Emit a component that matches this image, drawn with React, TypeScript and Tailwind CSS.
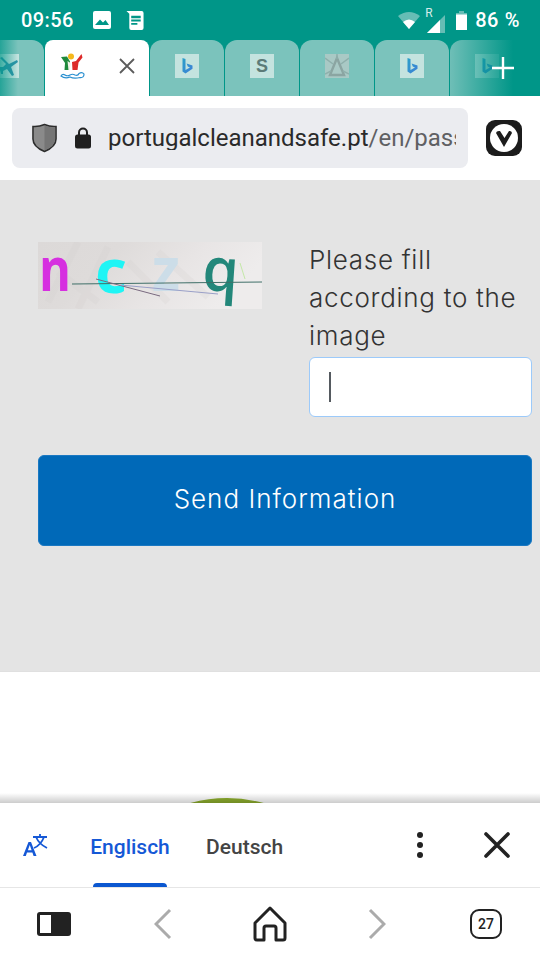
import React from "react";

const BingIcon = () => (
  <svg viewBox="0 0 24 24" className="w-6 h-6">
    <defs>
      <linearGradient id="bing" x1="0" y1="0" x2="1" y2="1">
        <stop offset="0" stopColor="#2aa0c8" />
        <stop offset="1" stopColor="#3f7fd8" />
      </linearGradient>
    </defs>
    <rect width="24" height="24" fill="#c4e3df" />
    <path d="M7.5 4 L10.5 5 V16 L15 13.5 L12.8 12.4 L11.6 9.6 L17.5 11.6 V14.8 L10.5 19.4 L7.5 17.6 Z" fill="url(#bing)" />
  </svg>
);

const Favicon = ({ children }: { children: React.ReactNode }) => (
  <div className="w-[74px] h-full shrink-0 rounded-t-xl bg-[#7bc3bc] flex items-center justify-center pb-[4px]">
    {children}
  </div>
);

const StatusBar = () => (
  <div className="h-10 flex items-center pl-[21px] pr-5 text-white">
    <span className="text-[20px] leading-none font-['Roboto',sans-serif] font-medium tracking-[0.4px] mr-[19px]">09:56</span>
    <svg viewBox="0 0 18 18" className="w-[18px] h-[18px] mr-[15px]">
      <rect width="18" height="18" rx="2" fill="#fff" />
      <path d="M2 14 L7 8.5 L10 11.5 L12.5 9 L16 14 Z" fill="#009688" />
    </svg>
    <svg viewBox="0 0 18 20" className="w-[18px] h-[19px]">
      <path d="M0 0 H16 a2 2 0 0 1 2 2 V18 a2 2 0 0 1 -2 2 H5 a2 2 0 0 1 -2 -2 V3 Z" fill="#fff" />
      <path d="M5 5 H15 V7.5 H5 Z M5 9 H15 V11 H5 Z M5 12.5 H11.5 V14.5 H5 Z" fill="#009688" />
    </svg>
    <div className="flex-1" />
    <svg viewBox="0 0 22 18" className="w-[22px] h-[18px] mr-[6px]">
      <path d="M0 5 Q11 -3 22 5 L11 18 Z" fill="#66bdb5" />
      <path d="M5 11 Q11 6 17 11 L11 18 Z" fill="#fff" />
    </svg>
    <div className="relative w-[20px] h-[26px] mr-[10px]">
      <span className="absolute left-[-1px] top-0 text-[12px] leading-none text-[#d5ecea] font-['Roboto',sans-serif]">R</span>
      <svg viewBox="0 0 18 18" className="absolute left-[1px] bottom-0 w-[18px] h-[18px]">
        <path d="M0 18 L18 0 V18 Z" fill="#66bdb5" />
        <path d="M0 18 L13 5 V18 Z" fill="#fff" />
      </svg>
    </div>
    <svg viewBox="0 0 11 19" className="w-[11px] h-[19px] mr-[8px]">
      <path d="M3 0 H8 V2 H11 V5 H0 V2 H3 Z" fill="#66bdb5" />
      <path d="M0 3.5 H11 V19 H0 Z" fill="#fff" />
    </svg>
    <span className="text-[20px] leading-none font-['Roboto',sans-serif] font-medium tracking-[0.6px]">86 %</span>
  </div>
);

const TabStrip = () => (
  <div className="relative h-14 overflow-hidden">
    <div className="flex gap-px h-full ml-[-30px] w-[700px]">
      <Favicon>
        <svg viewBox="0 0 24 24" className="w-6 h-6">
          <rect width="24" height="24" fill="#c4e3df" />
          <path d="M7 3 L14 10 L22 6 L23 8 L16 13 L19 21 L17 22 L12 15 L8 17 L8 20 L6 20 L5 16 L2 14 L3 13 L8 13 L11 10 L5 4 Z" fill="#2e93a8" />
        </svg>
      </Favicon>
      <div className="w-[104px] h-full shrink-0 rounded-t-lg bg-white flex items-center pl-[15px] pb-[4px]">
        <svg viewBox="0 0 26 26" className="w-[26px] h-[26px]">
          <circle cx="11" cy="3.5" r="3" fill="#f5b81c" />
          <path d="M1 4 L7 3.5 L10 8.5 L9 17 H4.5 L5 10 Z" fill="#1f8a3c" />
          <path d="M7.5 8 L10.5 10 L10 17 H8.5 Z" fill="#f2f2e8" />
          <path d="M21.5 1 L22.5 4.5 L18.5 9.5 L17.5 17 H12.5 L12 9 L16 8 Z" fill="#dd2a2a" />
          <path d="M1 23 Q2.5 20.5 5 22 T10 22 T15 22 Q18 23 19 20.5 Q22 18.5 24 21 Q24 25 20 24.5 Q14 26 10 24 Q5 26 1 23 Z" fill="none" stroke="#2a8fd0" strokeWidth="1.2" />
        </svg>
        <svg viewBox="0 0 16 16" className="w-4 h-4 ml-[33px]">
          <path d="M1 1 L15 15 M15 1 L1 15" stroke="#5c5c5c" strokeWidth="1.8" />
        </svg>
      </div>
      <Favicon><BingIcon /></Favicon>
      <Favicon>
        <div className="w-6 h-6 bg-[#c4e3df] flex items-center justify-center text-[18px] font-bold text-[#5c7b78] font-['Liberation_Sans',sans-serif]">S</div>
      </Favicon>
      <Favicon>
        <svg viewBox="0 0 24 24" className="w-6 h-6">
          <rect width="24" height="24" fill="#a9c9c5" />
          <path d="M12 4 L19 21 H5 Z" fill="none" stroke="#8ba5a2" strokeWidth="2.4" />
          <path d="M0 4 L8 10 M24 4 L16 10 M0 20 L6 17 M24 20 L18 17 M12 0 V5" stroke="#8fb0ac" strokeWidth="1.5" />
        </svg>
      </Favicon>
      <Favicon><BingIcon /></Favicon>
      <Favicon><BingIcon /></Favicon>
    </div>
    {/* fades at both ends of the strip */}
    <div className="absolute left-0 top-0 h-full w-[18px] bg-gradient-to-r from-[#009688]/70 to-transparent" />
    <div className="absolute right-0 top-0 h-full w-[90px] bg-gradient-to-l from-[#009688] from-30% to-[#009688]/10" />
    <svg viewBox="0 0 22 22" className="absolute left-[492px] top-[17px] w-[22px] h-[22px]">
      <path d="M11 0 V22 M0 11 H22" stroke="#fff" strokeWidth="2.4" />
    </svg>
  </div>
);

const AddressBar = () => (
  <div className="h-[84px] bg-white flex items-center pl-3 pr-[18px]">
    <div className="w-[456px] h-[60px] rounded-lg bg-[#ebecf0] flex items-center pl-[20px] pr-[12px]">
      <svg viewBox="0 0 26 30" className="w-[25px] h-[30px] shrink-0">
        <path d="M13 1 Q19 3.5 25 3 V16 Q25 24 13 29 Q1 24 1 16 V3 Q7 3.5 13 1 Z" fill="#8a8a8a" stroke="#2c2c2c" strokeWidth="1.6" />
        <path d="M13 2 Q19 4.5 24 4 V16 Q24 23 13 28 Z" fill="#757575" />
      </svg>
      <svg viewBox="0 0 16 22" className="w-4 h-[22px] shrink-0 ml-[18px]">
        <path d="M4 9 V5.5 a4 4 0 0 1 8 0 V9" fill="none" stroke="#1f1f1f" strokeWidth="2" />
        <rect y="7.5" width="16" height="14" rx="2.5" fill="#1f1f1f" />
      </svg>
      <div className="ml-[17px] overflow-hidden whitespace-nowrap text-[24px] leading-none font-['Roboto',sans-serif] text-[#2a2a2a]">
        portugalcleanandsafe.pt<span className="text-[#5f6063]">/en/passenger</span>
      </div>
    </div>
    <div className="ml-auto">
      <svg viewBox="0 0 36 36" className="w-9 h-9">
        <rect width="36" height="36" rx="9" fill="#1c1c1c" />
        <circle cx="18" cy="18" r="14" fill="#fff" />
        <path d="M10 13 L18 27 L26 13 Q25.5 10.5 23 11 L18.5 18 L14 11 Q10.5 10.5 10 13 Z" fill="#1c1c1c" />
      </svg>
    </div>
  </div>
);

const Captcha = () => (
  <svg viewBox="0 0 224 67" className="w-[224px] h-[67px] shrink-0">
    <defs>
      <linearGradient id="noise" x1="0" y1="0" x2="1" y2="0.3">
        <stop offset="0" stopColor="#dcd9d8" />
        <stop offset="0.35" stopColor="#dedbda" />
        <stop offset="0.7" stopColor="#e8e5e5" />
        <stop offset="1" stopColor="#eeecec" />
      </linearGradient>
    </defs>
    <rect width="224" height="67" fill="url(#noise)" />
    <path d="M40 0 L10 60 M70 5 L40 67 M90 20 L130 60 M120 10 L170 55 M20 30 L60 60" stroke="#d2cecd" strokeWidth="7" opacity="0.2" />
    <text x="1" y="49" fontSize="60" fontWeight="700" fill="#d62fe0" fontFamily="'Open Sans', sans-serif" textLength="32" lengthAdjust="spacingAndGlyphs">n</text>
    <text x="57" y="51" fontSize="60" fontWeight="700" fill="#1ff5f5" fontFamily="'Open Sans', sans-serif" textLength="32" lengthAdjust="spacingAndGlyphs">c</text>
    <text x="114" y="49" fontSize="60" fontWeight="700" fill="#ccdde8" fontFamily="'Open Sans', sans-serif" textLength="28" lengthAdjust="spacingAndGlyphs">z</text>
    <text x="164" y="49" fontSize="60" fontWeight="600" fill="#23877a" fontFamily="'Open Sans', sans-serif" textLength="36" lengthAdjust="spacingAndGlyphs" transform="rotate(4 182 40)">q</text>
    <path d="M34 42 L224 40" stroke="#3f6f68" strokeWidth="1" />
    <path d="M58 37 L122 54" stroke="#7a6a80" strokeWidth="1" />
    <path d="M82 43 L180 52" stroke="#9aa0c8" strokeWidth="1" />
    <path d="M202 21 L207 37" stroke="#c4e8a8" strokeWidth="1" />
  </svg>
);

const PageBody = () => (
  <div className="h-[492px] bg-[#e4e4e4] border-b border-[#e0e0e0] pl-[38px] pr-2 pt-[61px] font-['Inter',sans-serif]">
    <div className="flex items-start">
      <div className="w-[271px] shrink-0 pt-px"><Captcha /></div>
      <div className="flex-1">
        <p className="text-[26px] leading-[38px] text-[#333] font-light tracking-[0.7px]">Please fill according to the image</p>
        <div className="mt-[2px] h-[60px] rounded-md border border-[#9ccafa] bg-white flex items-center pl-[19px]">
          <div className="w-[2px] h-[30px] bg-[#555a60]" />
        </div>
      </div>
    </div>
    <button className="mt-[38px] w-full h-[91px] pb-1 rounded-md border border-[#1a78c2] bg-[#0069b8] text-white text-[26px] tracking-[1px] font-light">
      Send Information
    </button>
  </div>
);

const TranslateBar = () => (
  <div className="h-[85px] bg-white flex items-center font-['Roboto',sans-serif] border-b border-[#e6e6e6]">
    <svg viewBox="0 0 26 24" className="w-[26px] h-6 ml-[22px]">
      <path d="M1 23 L6.5 9 H9 L14.5 23 H11.6 L10.4 19.6 H5 L3.8 23 Z M5.9 17.2 H9.6 L7.75 12 Z" fill="#1558d6" />
      <path d="M11 4 H25 M18 1 V4 M22 4 Q19 12 12 15 M14 4 Q17 11 25 15" fill="none" stroke="#1558d6" strokeWidth="1.8" />
    </svg>
    <div className="relative ml-[42px] h-full w-[80px] flex items-center justify-center pt-1">
      <span className="text-[21px] font-medium text-[#1558d6] leading-none">Englisch</span>
      <div className="absolute left-[3px] right-[3px] bottom-0 h-1 rounded-t bg-[#0b57d0]" />
    </div>
    <span className="ml-[36px] pt-1 text-[21px] font-medium text-[#444] leading-none">Deutsch</span>
    <div className="ml-[134px] flex flex-col gap-[4px]">
      <div className="w-[6px] h-[6px] rounded-full bg-[#222]" />
      <div className="w-[6px] h-[6px] rounded-full bg-[#222]" />
      <div className="w-[6px] h-[6px] rounded-full bg-[#222]" />
    </div>
    <svg viewBox="0 0 26 26" className="w-[26px] h-[26px] ml-[61px]">
      <path d="M2 2 L24 24 M24 2 L2 24" stroke="#222" strokeWidth="3.6" strokeLinecap="round" />
    </svg>
  </div>
);

const BottomNav = () => (
  <div className="h-[72px] bg-white flex items-center pl-[37px]">
    <svg viewBox="0 0 34 24" className="w-[34px] h-6">
      <rect x="0" y="0" width="34" height="24" rx="3" fill="#222" />
      <rect x="3" y="3" width="11" height="18" fill="#fff" />
    </svg>
    <svg viewBox="0 0 18 32" className="w-[18px] h-8 ml-[83px]">
      <path d="M16 2 L2 16 L16 30" fill="none" stroke="#ababab" strokeWidth="3" />
    </svg>
    <svg viewBox="0 0 34 36" className="w-[34px] h-9 ml-[81px]">
      <path d="M17 2 L32 17 V32 a2 2 0 0 1 -2 2 H23 V22 a2 2 0 0 0 -2 -2 H13 a2 2 0 0 0 -2 2 V34 H4 a2 2 0 0 1 -2 -2 V17 Z" fill="none" stroke="#222" strokeWidth="3" strokeLinejoin="round" />
    </svg>
    <svg viewBox="0 0 18 32" className="w-[18px] h-8 ml-[81px]">
      <path d="M2 2 L16 16 L2 30" fill="none" stroke="#ababab" strokeWidth="3" />
    </svg>
    <div className="w-8 h-[30px] ml-[84px] rounded-[9px] border-[2.5px] border-[#222] flex items-center justify-center text-[14px] font-medium text-[#222] font-['Roboto',sans-serif] leading-none">
      27
    </div>
  </div>
);

export default function App() {
  return (
    <div className="w-[540px] h-[960px] overflow-hidden bg-white flex flex-col">
      <div className="bg-[#009688]">
        <StatusBar />
        <TabStrip />
      </div>
      <AddressBar />
      <PageBody />
      <div className="relative h-[131px] bg-white overflow-hidden">
        <svg viewBox="0 0 88 6" className="absolute left-[183px] bottom-0 w-[88px] h-[5px]">
          <path d="M0 6 Q44 -6 88 6 Z" fill="#8fb02e" />
        </svg>
        <div className="absolute left-0 right-0 bottom-0 h-[10px] bg-gradient-to-b from-black/0 to-black/20" />
      </div>
      <TranslateBar />
      <BottomNav />
    </div>
  );
}
